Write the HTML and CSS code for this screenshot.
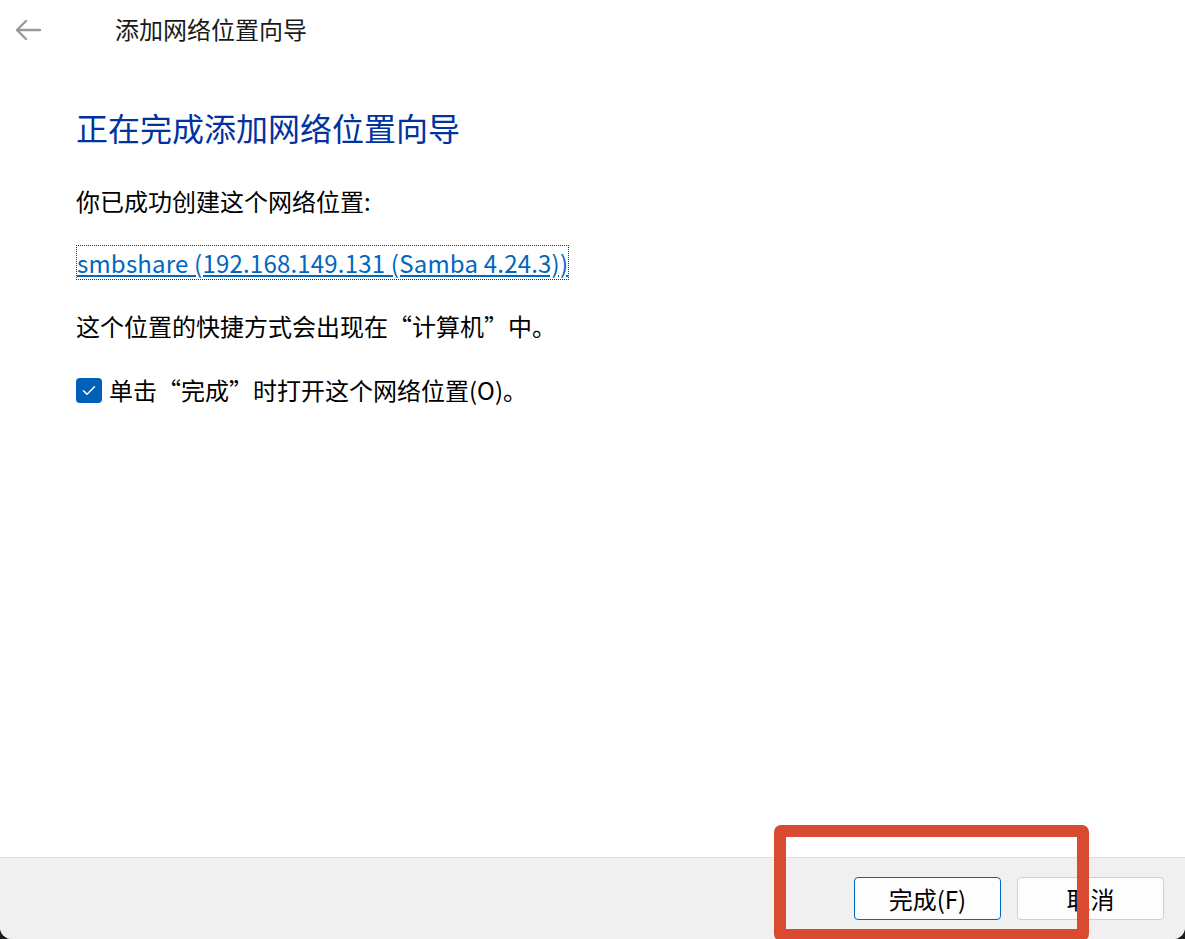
FILE: index.html
```html
<!DOCTYPE html>
<html lang="zh-CN">
<head>
<meta charset="utf-8">
<title>添加网络位置向导</title>
<link rel="stylesheet" href="styles.css">
</head>
<body>
<div class="window">
  <header class="titlebar">
    <svg class="back" width="26" height="22" viewBox="0 0 26 22" aria-hidden="true">
      <path d="M25 11H2M11 2L2 11L11 20" fill="none" stroke="#9a9a9a" stroke-width="2.4" stroke-linecap="round" stroke-linejoin="round"/>
    </svg>
    <span class="title">添加网络位置向导</span>
  </header>
  <main class="content">
    <h1 class="heading">正在完成添加网络位置向导</h1>
    <p class="text first">你已成功创建这个网络位置:</p>
    <p class="text link-row"><a class="link" href="#">smbshare (192.168.149.131 (Samba 4.24.3))</a></p>
    <p class="text note">这个位置的快捷方式会出现在“计算机”中。</p>
    <label class="check-row">
      <span class="checkbox">
        <svg width="14" height="11" viewBox="0 0 14 11" aria-hidden="true"><path d="M1.5 5.8L5 9.2L12.5 1.8" fill="none" stroke="#fff" stroke-width="1.6" stroke-linecap="round" stroke-linejoin="round"/></svg>
      </span>
      <span class="text">单击“完成”时打开这个网络位置(O)。</span>
    </label>
  </main>
  <footer class="footer">
    <button class="btn btn-primary">完成(F)</button>
    <button class="btn">取消</button>
  </footer>
  <div class="annotation"></div>
</div>
</body>
</html>
```

FILE: styles.css
```css
html, body {
  margin: 0;
  padding: 0;
  width: 1185px;
  height: 939px;
  background: #1c1c1c;
  overflow: hidden;
}
body {
  font-family: "Noto Sans CJK SC", "Noto Sans", sans-serif;
  color: #000;
}
.window {
  position: relative;
  width: 1185px;
  height: 939px;
  background: #fff;
  border-radius: 0 0 12px 12px;
  overflow: hidden;
  display: flex;
  flex-direction: column;
}
.titlebar {
  height: 62px;
  display: flex;
  align-items: center;
  padding-left: 15px;
  box-sizing: border-box;
}
.back {
  display: block;
  margin-top: -2px;
}
.title {
  margin-left: 74px;
  margin-top: -4px;
  font-size: 24px;
  line-height: 1;
  color: #1a1a1a;
}
.content {
  flex: 1;
  padding-left: 76px;
  padding-top: 41px;
}
.heading {
  margin: 0;
  font-size: 32px;
  font-weight: normal;
  color: #0033a0;
  line-height: 48px;
}
.text {
  margin: 0;
  font-size: 24px;
  line-height: 36px;
}
.text.first {
  margin-top: 32px;
}
.link-row {
  margin-top: 26px;
}
.link {
  color: #0067c0;
  text-decoration: underline;
  letter-spacing: 0.2px;
  outline: 1px dotted #333;
  outline-offset: -1px;
  padding: 0 1px;
}
.text.note {
  margin-top: 27px;
}
.check-row {
  display: flex;
  align-items: center;
  margin-top: 28px;
}
.checkbox {
  width: 26px;
  height: 25px;
  border-radius: 4px;
  background: #005fb8;
  display: flex;
  align-items: center;
  justify-content: center;
  margin-right: 7px;
}
.footer {
  height: 82px;
  box-sizing: border-box;
  background: #f0f0f0;
  border-top: 1px solid #dedede;
  display: flex;
  justify-content: flex-end;
  align-items: flex-start;
  padding-top: 19px;
  padding-right: 21px;
  gap: 16px;
}
.btn {
  width: 147px;
  height: 43px;
  border-radius: 4px;
  border: 1px solid #d0d0d0;
  background: #fdfdfd;
  font-family: inherit;
  font-size: 24px;
  color: #000;
  padding: 0;
}
.btn-primary {
  border-color: #0067c0;
}
.annotation {
  position: absolute;
  left: 774px;
  top: 825px;
  width: 315px;
  height: 116px;
  box-sizing: border-box;
  border: 12px solid #d84b30;
  border-radius: 7px;
}
```
